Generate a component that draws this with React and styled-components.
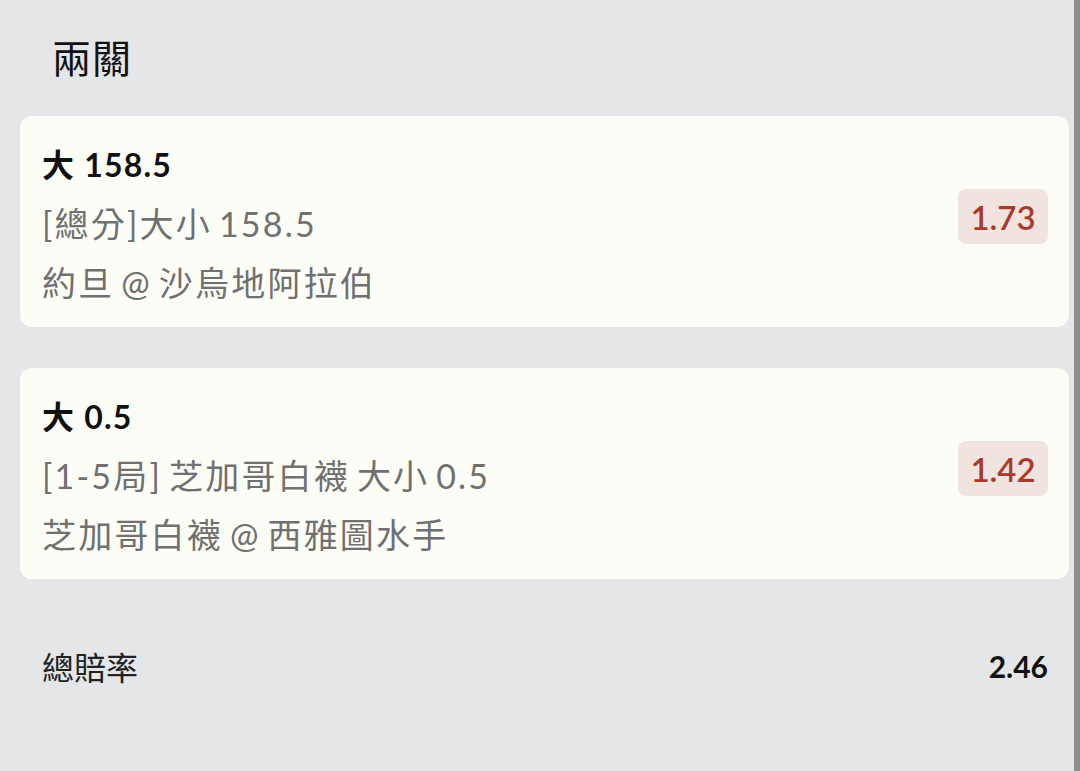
import styled, { createGlobalStyle } from "styled-components";

const GlobalStyle = createGlobalStyle`
  html, body {
    margin: 0;
    padding: 0;
    background: #e5e6e8;
  }
  * {
    box-sizing: border-box;
  }
`;

const legs = [
  {
    pick: "大 158.5",
    market: "[總分]大小 158.5",
    game: "約旦 @ 沙烏地阿拉伯",
    odds: "1.73",
  },
  {
    pick: "大 0.5",
    market: "[1-5局] 芝加哥白襪 大小 0.5",
    game: "芝加哥白襪 @ 西雅圖水手",
    odds: "1.42",
  },
];

export default function App() {
  return (
    <Page>
      <GlobalStyle />
      <Main>
        <Title>兩關</Title>
        <CardList>
          {legs.map((leg) => (
            <Card key={leg.pick}>
              <Info>
                <Pick>{leg.pick}</Pick>
                <Detail>{leg.market}</Detail>
                <Detail>{leg.game}</Detail>
              </Info>
              <Odds>{leg.odds}</Odds>
            </Card>
          ))}
        </CardList>
        <TotalRow>
          <TotalLabel>總賠率</TotalLabel>
          <TotalValue>2.46</TotalValue>
        </TotalRow>
      </Main>
      <ScrollStrip />
    </Page>
  );
}

const Page = styled.div`
  display: flex;
  width: 1080px;
  height: 771px;
  overflow: hidden;
  background: #e5e6e8;
  font-family: Lato, "Noto Sans CJK TC", sans-serif;
`;

const Main = styled.div`
  flex: 1;
  display: flex;
  flex-direction: column;
  padding: 24px 5px 0 20px;
`;

const ScrollStrip = styled.div`
  width: 6px;
  height: 100%;
  background: #8f8f8f;
`;

const Title = styled.div`
  padding-left: 32px;
  height: 64px;
  line-height: 64px;
  font-family: "Noto Sans CJK TC", sans-serif;
  font-size: 39px;
  letter-spacing: 1px;
  color: #111;
`;

const CardList = styled.div`
  display: flex;
  flex-direction: column;
  gap: 41px;
  margin-top: 28px;
`;

const Card = styled.div`
  display: flex;
  align-items: center;
  justify-content: space-between;
  height: 211px;
  padding: 19px 21px 15px 22px;
  border-radius: 12px;
  background: #fdfdf7;
`;

const Info = styled.div`
  display: flex;
  flex-direction: column;
`;

const Pick = styled.div`
  line-height: 58px;
  font-size: 32px;
  font-weight: 700;
  letter-spacing: 1.2px;
  color: #111;
`;

const Detail = styled.div`
  line-height: 59px;
  font-size: 34px;
  letter-spacing: 2.2px;
  word-spacing: -4px;
  color: #707070;
`;

const Odds = styled.div`
  display: flex;
  align-items: center;
  justify-content: center;
  width: 90px;
  height: 55px;
  margin-bottom: 14px;
  border-radius: 8px;
  background: #f1e4df;
  color: #a83a2d;
  font-size: 33px;
  font-weight: 600;
`;

const TotalRow = styled.div`
  display: flex;
  align-items: center;
  justify-content: space-between;
  margin-top: 62px;
  padding: 0 21px 0 22px;
  height: 50px;
`;

const TotalLabel = styled.div`
  font-family: "Noto Sans CJK TC", sans-serif;
  font-size: 32px;
  color: #222;
`;

const TotalValue = styled.div`
  font-size: 30px;
  font-weight: 700;
  color: #111;
`;
